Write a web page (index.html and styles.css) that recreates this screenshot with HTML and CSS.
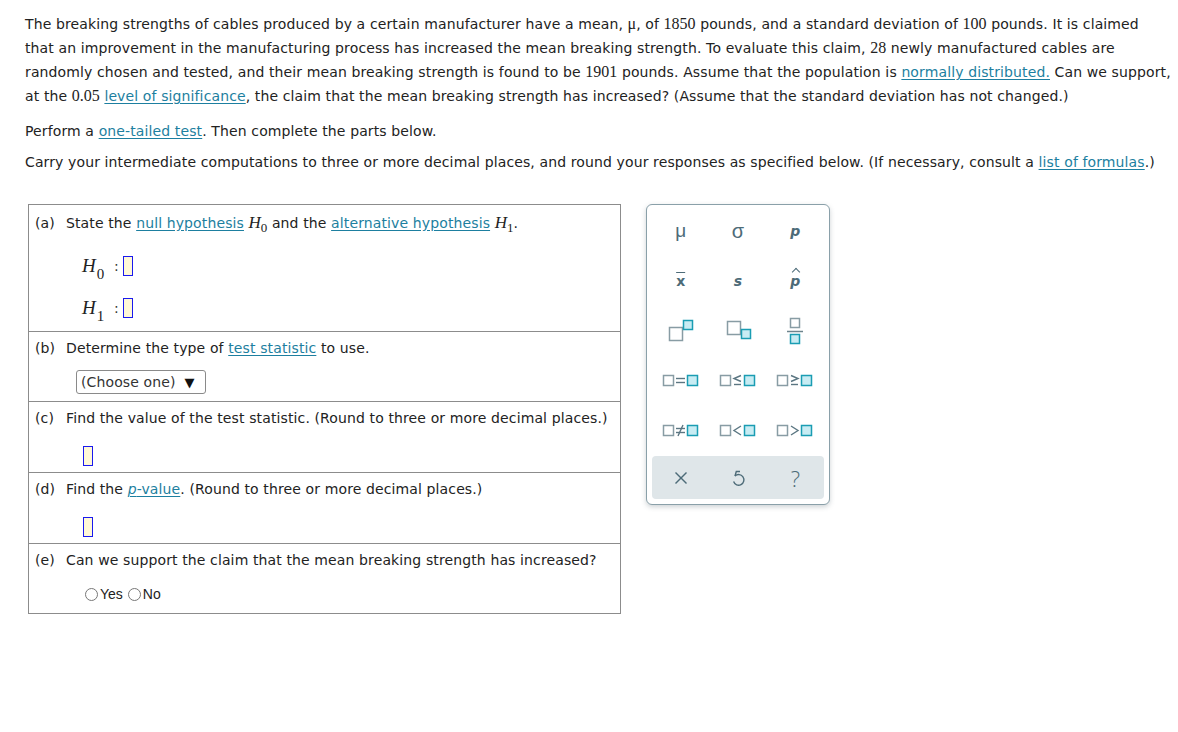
FILE: index.html
```html
<!DOCTYPE html>
<html>
<head>
<meta charset="utf-8">
<link rel="stylesheet" href="styles.css">
</head>
<body>
<div class="page">
  <p class="intro">The breaking strengths of cables produced by a certain manufacturer have a mean, <span class="num">μ</span>, of <span class="num">1850</span> pounds, and a standard deviation of <span class="num">100</span> pounds. It is claimed<br>that an improvement in the manufacturing process has increased the mean breaking strength. To evaluate this claim, <span class="num">28</span> newly manufactured cables are<br>randomly chosen and tested, and their mean breaking strength is found to be <span class="num">1901</span> pounds. Assume that the population is <a class="lnk">normally distributed.</a> Can we support,<br>at the <span class="num">0.05</span> <a class="lnk">level of significance</a>, the claim that the mean breaking strength has increased? (Assume that the standard deviation has not changed.)</p>
  <p class="perform">Perform a <a class="lnk">one-tailed test</a>. Then complete the parts below.</p>
  <p class="carry">Carry your intermediate computations to three or more decimal places, and round your responses as specified below. (If necessary, consult a <a class="lnk">list of formulas</a>.)</p>

  <div class="work">
    <div class="parts">
      <div class="part part-a">
        <div class="q"><span class="lbl">(a)</span><span>State the <a class="lnk">null hypothesis</a> <span class="mh">H<sub>0</sub></span> and the <a class="lnk">alternative hypothesis</a> <span class="mh">H<sub>1</sub></span>.</span></div>
        <div class="hyps">
          <div class="hyp"><span class="mh big">H<sub>0</sub></span><span class="colon">:</span><span class="box"></span></div>
          <div class="hyp"><span class="mh big">H<sub>1</sub></span><span class="colon">:</span><span class="box"></span></div>
        </div>
      </div>
      <div class="part part-b">
        <div class="q"><span class="lbl">(b)</span><span>Determine the type of <a class="lnk">test statistic</a> to use.</span></div>
        <div class="ans ans-sel"><span class="select">(Choose one)<span class="arrow">▼</span></span></div>
      </div>
      <div class="part part-c">
        <div class="q"><span class="lbl">(c)</span><span>Find the value of the test statistic. (Round to three or more decimal places.)</span></div>
        <div class="ans ans-box"><span class="box"></span></div>
      </div>
      <div class="part part-d">
        <div class="q"><span class="lbl">(d)</span><span>Find the <a class="lnk"><i>p</i>-value</a>. (Round to three or more decimal places.)</span></div>
        <div class="ans ans-box"><span class="box"></span></div>
      </div>
      <div class="part part-e">
        <div class="q"><span class="lbl">(e)</span><span>Can we support the claim that the mean breaking strength has increased?</span></div>
        <div class="ans ans-radio"><span class="radio"></span><span class="rtext">Yes</span><span class="radio"></span><span class="rtext">No</span></div>
      </div>
    </div>

    <div class="keypad">
      <div class="keys">
        <div class="key"><span class="sym mu">μ</span></div>
        <div class="key"><span class="sym sigma">σ</span></div>
        <div class="key"><span class="sym pi">p</span></div>
        <div class="key"><span class="sym xbar">x</span></div>
        <div class="key"><span class="sym si">s</span></div>
        <div class="key"><span class="sym phat">p</span></div>
        <div class="key">
          <svg width="30" height="28" viewBox="0 0 30 28"><rect x="3.5" y="10.5" width="13" height="13" class="g"/><rect x="17.5" y="3.5" width="9" height="9" class="t"/></svg>
        </div>
        <div class="key">
          <svg width="30" height="28" viewBox="0 0 30 28"><rect x="4.5" y="4.5" width="13" height="13" class="g"/><rect x="18.5" y="12.5" width="9" height="9" class="t"/></svg>
        </div>
        <div class="key">
          <svg width="22" height="30" viewBox="0 0 22 30"><rect x="6.5" y="2.5" width="9" height="9" class="g"/><line x1="3" y1="15.5" x2="19" y2="15.5" class="bar"/><rect x="6.5" y="18.5" width="9" height="9" class="t"/></svg>
        </div>
        <div class="key">
          <svg width="40" height="16" viewBox="0 0 40 16"><rect x="2.5" y="2.5" width="10" height="10" class="g"/><line x1="15" y1="5.5" x2="24" y2="5.5" class="op"/><line x1="15" y1="9.5" x2="24" y2="9.5" class="op"/><rect x="26.5" y="2.5" width="10" height="10" class="t"/></svg>
        </div>
        <div class="key">
          <svg width="40" height="16" viewBox="0 0 40 16"><rect x="2.5" y="2.5" width="10" height="10" class="g"/><polyline points="23,2.5 16,5.5 23,8.5" class="op"/><line x1="16" y1="11.5" x2="23" y2="11.5" class="op"/><rect x="26.5" y="2.5" width="10" height="10" class="t"/></svg>
        </div>
        <div class="key">
          <svg width="40" height="16" viewBox="0 0 40 16"><rect x="2.5" y="2.5" width="10" height="10" class="g"/><polyline points="16,2.5 23,5.5 16,8.5" class="op"/><line x1="16" y1="11.5" x2="23" y2="11.5" class="op"/><rect x="26.5" y="2.5" width="10" height="10" class="t"/></svg>
        </div>
        <div class="key">
          <svg width="40" height="16" viewBox="0 0 40 16"><rect x="2.5" y="2.5" width="10" height="10" class="g"/><line x1="15" y1="5.5" x2="24" y2="5.5" class="op"/><line x1="15" y1="9.5" x2="24" y2="9.5" class="op"/><line x1="22" y1="2" x2="17" y2="13" class="op"/><rect x="26.5" y="2.5" width="10" height="10" class="t"/></svg>
        </div>
        <div class="key">
          <svg width="40" height="16" viewBox="0 0 40 16"><rect x="2.5" y="2.5" width="10" height="10" class="g"/><polyline points="23,3 16,7.5 23,12" class="op"/><rect x="26.5" y="2.5" width="10" height="10" class="t"/></svg>
        </div>
        <div class="key">
          <svg width="40" height="16" viewBox="0 0 40 16"><rect x="2.5" y="2.5" width="10" height="10" class="g"/><polyline points="16,3 23,7.5 16,12" class="op"/><rect x="26.5" y="2.5" width="10" height="10" class="t"/></svg>
        </div>
      </div>
      <div class="actions">
        <div class="key">
          <svg width="16" height="16" viewBox="0 0 16 16"><line x1="2.5" y1="2.5" x2="13.5" y2="13.5" class="act"/><line x1="13.5" y1="2.5" x2="2.5" y2="13.5" class="act"/></svg>
        </div>
        <div class="key">
          <svg width="16" height="18" viewBox="0 0 16 18"><path d="M10 2.5 H6.3 L5 7" class="act"/><path d="M5 7 A5.3 5.3 0 1 1 3.6 12.6" class="act"/></svg>
        </div>
        <div class="key"><span class="help">?</span></div>
      </div>
    </div>
  </div>
</div>
</body>
</html>
```

FILE: styles.css
```css
* { box-sizing: border-box; }
body {
  margin: 0;
  background: #fff;
  font-family: "DejaVu Sans", Verdana, sans-serif;
  font-size: 14px;
  letter-spacing: 0.12px;
  color: #222;
}
.page {
  padding: 12px 0 0 25px;
}
p {
  margin: 0;
  line-height: 24px;
}
.intro { margin-bottom: 11px; }
.perform { margin-bottom: 7px; }
.carry { margin-bottom: 30px; }
.num {
  font-family: "Liberation Serif", "Times New Roman", serif;
  font-size: 16px;
  letter-spacing: 0;
}
.lnk {
  color: #1d7fa0;
  text-decoration: underline;
  text-underline-offset: 2px;
}
.mh {
  font-family: "Liberation Serif", "Times New Roman", serif;
  font-style: italic;
  font-size: 17px;
  letter-spacing: 0;
}
.mh sub {
  font-style: normal;
  font-size: 13px;
  vertical-align: -4px;
  line-height: 0;
}
.work {
  display: flex;
  align-items: flex-start;
  gap: 25px;
  padding-left: 3px;
}
.parts {
  width: 593px;
  border: 1px solid #8c8c8c;
}
.part {
  padding: 4px 6px 0 6px;
  border-top: 1px solid #8c8c8c;
}
.part:first-child { border-top: none; }
.q {
  display: flex;
  line-height: 24px;
}
.lbl {
  width: 31px;
  flex: none;
}
.ans {
  margin-top: 10px;
  display: flex;
  align-items: center;
  padding-left: 41px;
}
.ans-sel { height: 24px; margin-bottom: 7px; }
.ans-box { height: 33px; padding-left: 48px; margin-top: 9px; }
.ans-radio { height: 24px; margin-bottom: 7px; padding-left: 50px; }
.part-a { padding-top: 6px; padding-bottom: 2px; }
.hyps { margin-top: 10px; }
.hyp {
  display: flex;
  align-items: center;
  height: 42px;
  padding-left: 47px;
}
.mh.big { font-size: 19px; width: 30px; }
.mh.big sub { font-size: 15px; vertical-align: -7px; margin-left: 1px; }
.colon { margin: 0 4px 0 2px; color: #333; }
.box {
  display: inline-block;
  width: 10px;
  height: 20px;
  border: 1px solid #1a1aee;
  background: #fff8d6;
}
.select {
  display: inline-flex;
  align-items: center;
  height: 24px;
  width: 130px;
  padding-left: 4px;
  border: 1px solid #8a8a8a;
  border-radius: 3px;
  background: #fff;
  color: #333;
}
.arrow { margin-left: 9px; font-size: 13px; color: #111; }
.radio {
  display: inline-block;
  width: 13px;
  height: 13px;
  border: 1px solid #777;
  border-radius: 50%;
  margin-right: 2px;
}
.rtext { margin-right: 5px; color: #222; font-family: "Liberation Sans", Arial, sans-serif; letter-spacing: 0; }

.keypad {
  width: 184px;
  height: 301px;
  border: 1px solid #8aa0a9;
  border-radius: 6px;
  box-shadow: 0 2px 5px rgba(60, 80, 90, 0.25);
  background: #fff;
  padding: 0 5px;
  display: flex;
  flex-direction: column;
  letter-spacing: 0;
}
.keys {
  display: grid;
  grid-template-columns: repeat(3, 1fr);
  grid-auto-rows: 50px;
  padding-top: 1px;
}
.key {
  display: flex;
  align-items: center;
  justify-content: center;
}
.sym {
  color: #4d6b78;
  font-family: "DejaVu Sans", sans-serif;
  font-size: 15px;
}
.mu { font-family: "Liberation Sans", sans-serif; font-size: 19px; }
.sigma { font-family: "Liberation Sans", sans-serif; font-size: 20px; }
.pi, .si { font-style: italic; font-weight: bold; font-size: 14px; }
.xbar { font-weight: bold; text-decoration: overline; font-size: 14px; }
.phat { font-style: italic; font-weight: bold; font-size: 14px; position: relative; }
.phat::before {
  content: "";
  position: absolute;
  left: 3px;
  top: -4px;
  width: 5px;
  height: 5px;
  border-left: 1.5px solid #4d6b78;
  border-top: 1.5px solid #4d6b78;
  transform: rotate(45deg);
}
svg .g { fill: #fff; stroke: #889ca4; stroke-width: 1.5; }
svg .t { fill: #c8ecf3; stroke: #1a9db3; stroke-width: 1.5; }
svg .bar { stroke: #6d848d; stroke-width: 1.5; }
svg .op { fill: none; stroke: #5b7682; stroke-width: 1.4; }
svg .act { fill: none; stroke: #4d6b78; stroke-width: 1.4; }
.actions {
  margin-top: 0;
  height: 43px;
  background: #dfe6e9;
  border-radius: 4px;
  display: grid;
  grid-template-columns: repeat(3, 1fr);
}
.help {
  color: #4d6b78;
  font-family: "Open Sans", sans-serif;
  font-size: 22px;
  font-weight: 300;
}
```
